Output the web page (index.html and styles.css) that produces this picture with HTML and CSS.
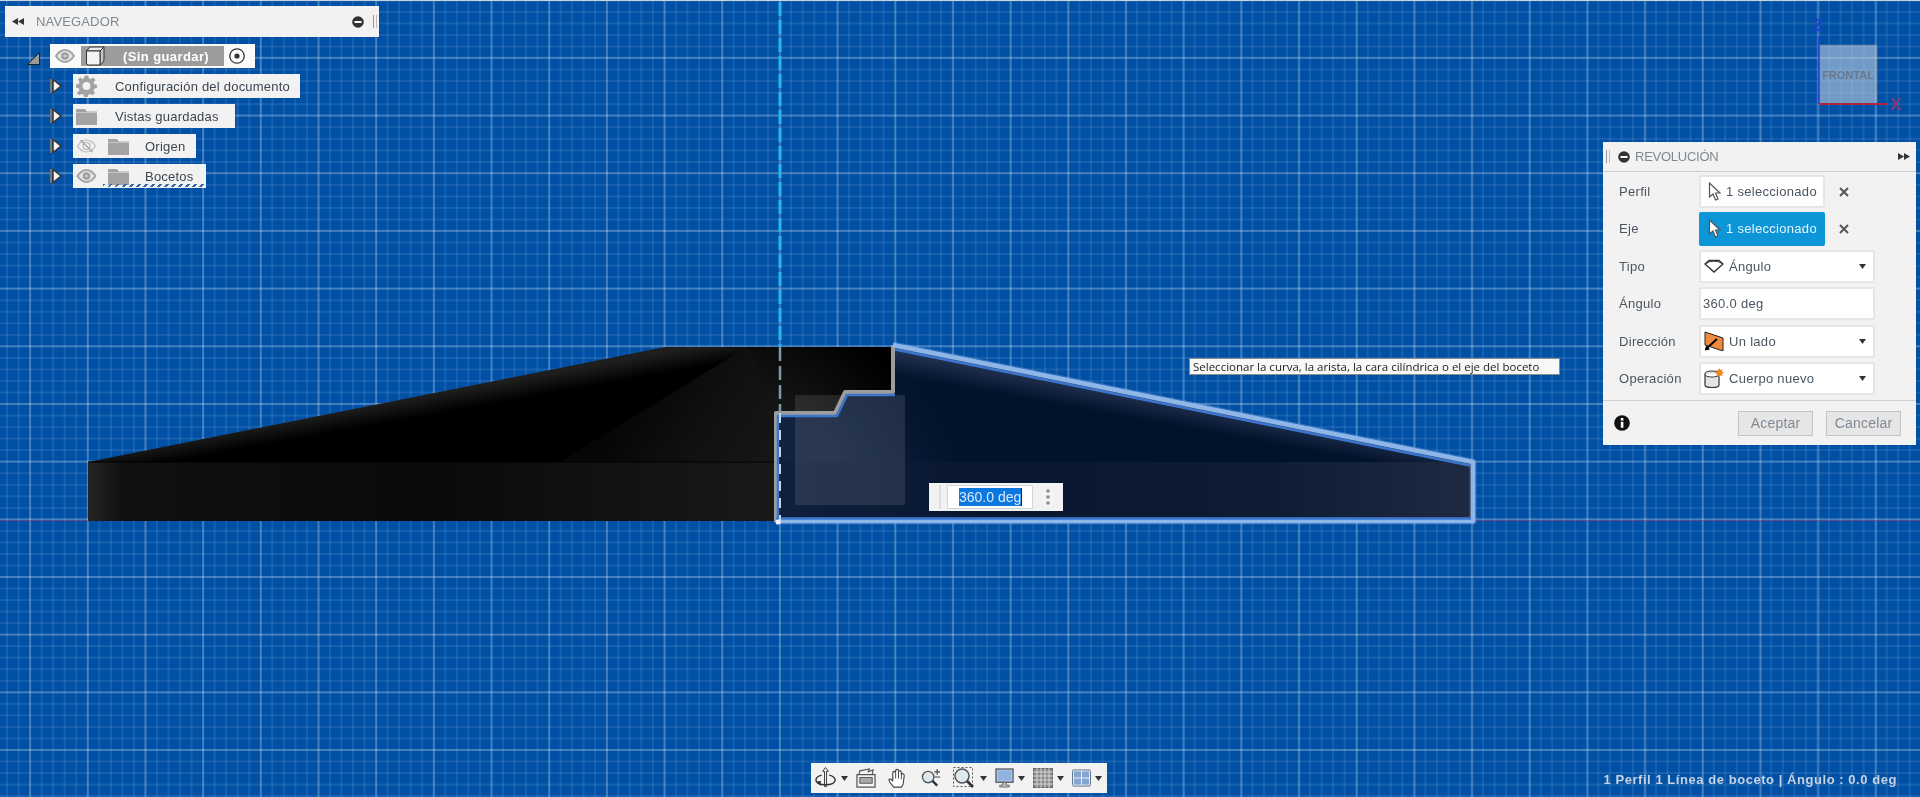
FILE: index.html
```html
<!DOCTYPE html>
<html lang="es">
<head>
<meta charset="utf-8">
<title>Revolución</title>
<link rel="stylesheet" href="styles.css">
</head>
<body>
<svg class="defs" width="0" height="0" aria-hidden="true">
  <defs>
    <symbol id="eye" viewBox="0 0 20 14"><path d="M1 7C4 2.500 7 1 10 1s6 1.500 9 6c-3 4.500-6 6-9 6s-6-1.500-9-6z" fill="#e4e4e4" stroke="#a5a5a5" stroke-width="2"/><circle cx="10" cy="7" r="3.800" fill="#a0a0a0"/><circle cx="10" cy="7" r="1.300" fill="#d0d0d0"/></symbol>
    <symbol id="eyeoff" viewBox="0 0 20 14"><path d="M1 7C4 2.500 7 1 10 1s6 1.500 9 6c-3 4.500-6 6-9 6s-6-1.500-9-6z" fill="none" stroke="#b5b5b5" stroke-width="1.200"/><circle cx="10" cy="7" r="3.500" fill="none" stroke="#b5b5b5" stroke-width="1.200"/><path d="M4 1l12 12" stroke="#a5a5a5" stroke-width="1.400"/></symbol>
    <symbol id="folder" viewBox="0 0 21 17"><path d="M0 1h9l2 2.500h10V17H0z" fill="#a3a3a3"/><path d="M0 4.500h21" stroke="#cfcfcf" stroke-width=".8"/></symbol>
    <symbol id="expand" viewBox="0 0 12 16"><path d="M1 1v14" stroke="#777" stroke-width="2"/><path d="M3 1.500L11 8l-8 6.500z" fill="#f5f5f5" stroke="#333" stroke-width="1.500"/></symbol>
    <symbol id="caret" viewBox="0 0 7 5"><path d="M0 0h7L3.500 5z" fill="#333"/></symbol>
    <symbol id="cursor" viewBox="0 0 13 20"><path d="M1.500 1L1.500 15l3.500-3 2.500 6 2.500-1-2.500-6h4.500z" stroke="#555" stroke-width="1.200"/></symbol>
    <symbol id="remove" viewBox="0 0 10 10"><path d="M1 1l8 8M9 1L1 9" stroke="#555" stroke-width="2"/></symbol>
  </defs>
</svg>
<main class="viewport">
  <svg class="scene" viewBox="0 0 1920 797" width="1920" height="797" aria-hidden="true">
    <defs>
      <linearGradient id="bandDark" x1="88" y1="0" x2="776" y2="0" gradientUnits="userSpaceOnUse">
        <stop offset="0" stop-color="#242424"/><stop offset=".05" stop-color="#101010"/><stop offset=".5" stop-color="#0a0a0a"/><stop offset="1" stop-color="#191919"/>
      </linearGradient>
      <linearGradient id="bandNavy" x1="776" y1="0" x2="1473" y2="0" gradientUnits="userSpaceOnUse">
        <stop offset="0" stop-color="#10203c"/><stop offset=".3" stop-color="#081630"/><stop offset=".7" stop-color="#0d1b35"/><stop offset="1" stop-color="#1f2a42"/>
      </linearGradient>
      <linearGradient id="slopeDark" x1="376.500" y1="404.500" x2="380" y2="424" gradientUnits="userSpaceOnUse">
        <stop offset="0" stop-color="#1e1e1e"/><stop offset="1" stop-color="#000"/>
      </linearGradient>
      <linearGradient id="slopeNavy" x1="1180" y1="404" x2="1176" y2="426" gradientUnits="userSpaceOnUse">
        <stop offset="0" stop-color="#1f2f4e"/><stop offset="1" stop-color="#1f2f4e" stop-opacity="0"/>
      </linearGradient>
      <linearGradient id="diagDark" x1="640" y1="390" x2="760" y2="470" gradientUnits="userSpaceOnUse">
        <stop offset="0" stop-color="#060606"/><stop offset=".5" stop-color="#101010"/><stop offset="1" stop-color="#161616"/>
      </linearGradient>
      <linearGradient id="cornerBlack" x1="870" y1="352" x2="800" y2="425" gradientUnits="userSpaceOnUse">
        <stop offset="0" stop-color="#000"/><stop offset=".5" stop-color="#000" stop-opacity=".5"/><stop offset="1" stop-color="#000" stop-opacity="0"/>
      </linearGradient>
      <linearGradient id="diagNavy" x1="1010" y1="385" x2="850" y2="480" gradientUnits="userSpaceOnUse">
        <stop offset="0" stop-color="#02122b"/><stop offset=".45" stop-color="#03132c"/><stop offset="1" stop-color="#11213e"/>
      </linearGradient>
    </defs>
    <path class="axis-x" d="M0 520.500H88M1476 520.500H1920"/>
    <path d="M88 462L665 347H893V413H776V462z" fill="url(#slopeDark)"/>
    <path d="M560 462L747 347H893V413H776V462z" fill="url(#diagDark)"/>
    <path d="M747 347H893V392H845L835 413H776z" fill="url(#cornerBlack)"/>
    <path d="M88 462H776V521H88z" fill="url(#bandDark)"/>
    <path d="M88 462H776" stroke="#000" stroke-width="1"/>
    <path d="M776 413H835L845 392H893V345L1473 462H776z" fill="url(#diagNavy)"/>
    <path d="M893 345L1473 462H1300L893 380z" fill="url(#slopeNavy)"/>
    <path d="M776 462H1473V521H776z" fill="url(#bandNavy)"/>
    <rect class="sketch-plane" x="795" y="395" width="110" height="110"/>
    <path class="edge-glow" d="M893 345L1473 462V521H776"/>
    <path class="edge-grey" d="M776 522V413H835L845 392H893V345"/>
    <path class="edge-blue" d="M778 522V416H837L847 395H895"/>
    <path class="edge-light" d="M893 345L1473 462V521H776"/>
    <path class="edge-blue" d="M895 349.500L1470 465.500M776 518.500H1471"/>
    <path class="axis-top" d="M780 0V347"/>
    <path class="axis-low" d="M780 347V413"/>
    <path class="axis-mid" d="M780 413V523"/>
    <circle cx="778" cy="522" r="2.500" fill="#f0f4fa"/>
    <rect class="cube" x="1819" y="45" width="58" height="59"/>
    <text class="cube-label" x="1848" y="79">FRONTAL</text>
    <path d="M1819 36V104" stroke="#2a3fd8" stroke-width="1.600"/>
    <path d="M1819 104H1888" stroke="#b5213f" stroke-width="1.800"/>
    <text class="axis-label axis-label-z" x="1818" y="31">Z</text>
    <text class="axis-label axis-label-x" x="1896" y="110">X</text>
  </svg>

  <section class="navigator">
    <header class="nav-head">
      <svg class="ic-rewind" viewBox="0 0 12 7" width="12" height="7"><path d="M6 0v7L0 3.500zM12 0v7L6 3.500z" fill="#333"/></svg>
      <span class="nav-title">NAVEGADOR</span>
      <svg class="ic-minus" viewBox="0 0 12 12" width="12" height="12"><circle cx="6" cy="6" r="5.800" fill="#333"/><path d="M2.500 6h7" stroke="#fff" stroke-width="2"/></svg>
      <span class="grip"></span>
    </header>
    <ul class="tree">
      <li class="tree-row tree-root">
        <svg class="ic-open" viewBox="0 0 13 13" width="13" height="13"><path d="M.5 12.500h12V.5z" fill="#999" stroke="#222"/></svg>
        <div class="chip chip-root">
          <svg class="ic-eye" width="20" height="14"><use href="#eye"/></svg>
          <div class="doc-name">
            <svg class="ic-cube" viewBox="0 0 20 20" width="20" height="20"><path d="M5 1h14l-4 4H1.500z" fill="#e6e8ec" stroke="#222" stroke-width=".9"/><path d="M15 5l4-4v12c0 2-1 4-4 6z" fill="#c8c8c8" stroke="#222" stroke-width=".9"/><path d="M1.500 5H15v14H3.500a2 2 0 0 1-2-2z" fill="#f1f3f6" stroke="#222" stroke-width=".9"/></svg>
            <span>(Sin guardar)</span>
          </div>
          <svg class="ic-radio" viewBox="0 0 16 16" width="16" height="16"><circle cx="8" cy="8" r="7.200" fill="#fff" stroke="#333" stroke-width="1.300"/><circle cx="8" cy="8" r="2.600" fill="#333"/></svg>
        </div>
      </li>
      <li class="tree-row">
        <svg class="ic-expand" width="12" height="16"><use href="#expand"/></svg>
        <div class="chip chip-config">
          <svg class="ic-first" viewBox="0 0 24 24" width="22" height="22"><path fill="#a3a3a3" d="M10 1h4l.6 3 2.400 1 2.600-1.700 2.800 2.800L20 8.700l1 2.400 3 .6v3.600l-3 .6-1 2.400 1.700 2.600-2.800 2.800-2.600-1.700-2.400 1-.6 3h-4l-.6-3-2.400-1-2.600 1.700-2.800-2.800L4 17.900l-1-2.400-3-.6v-3.600l3-.6 1-2.400-1.700-2.600 2.800-2.800L6.700 5l2.400-1zM12 8.500a4.500 4.500 0 1 0 0 9 4.500 4.500 0 0 0 0-9z" transform="translate(0 -1)"/></svg>
          <span class="chip-text">Configuración del documento</span>
        </div>
      </li>
      <li class="tree-row">
        <svg class="ic-expand" width="12" height="16"><use href="#expand"/></svg>
        <div class="chip chip-views">
          <svg class="ic-first" width="21" height="17"><use href="#folder"/></svg>
          <span class="chip-text">Vistas guardadas</span>
        </div>
      </li>
      <li class="tree-row">
        <svg class="ic-expand" width="12" height="16"><use href="#expand"/></svg>
        <div class="chip chip-origin">
          <svg class="ic-first ic-eye-row" width="20" height="14"><use href="#eyeoff"/></svg>
          <svg class="ic-second" width="21" height="17"><use href="#folder"/></svg>
          <span class="chip-text">Origen</span>
        </div>
      </li>
      <li class="tree-row">
        <svg class="ic-expand" width="12" height="16"><use href="#expand"/></svg>
        <div class="chip chip-sketches">
          <svg class="ic-first ic-eye-row" width="20" height="14"><use href="#eye"/></svg>
          <svg class="ic-second" width="21" height="17"><use href="#folder"/></svg>
          <span class="chip-text">Bocetos</span>
        </div>
      </li>
    </ul>
  </section>

  <div class="hint">Seleccionar la curva, la arista, la cara cilíndrica o el eje del boceto</div>

  <div class="dim-input">
    <span class="dim-grip"></span>
    <div class="dim-field"><span class="dim-sel">360.0 deg</span><span class="dim-caret"></span></div>
    <svg class="dim-more" viewBox="0 0 4 16" width="4" height="16"><circle cx="2" cy="2" r="1.800"/><circle cx="2" cy="8" r="1.800"/><circle cx="2" cy="14" r="1.800"/></svg>
  </div>

  <section class="dialog">
    <header class="dlg-head">
      <span class="grip grip-left"></span>
      <svg viewBox="0 0 12 12" width="12" height="12"><circle cx="6" cy="6" r="5.800" fill="#333"/><path d="M2.500 6h7" stroke="#fff" stroke-width="2"/></svg>
      <span class="dlg-title">REVOLUCIÓN</span>
      <svg class="ic-forward" viewBox="0 0 12 7" width="12" height="7"><path d="M0 0v7l6-3.500zM6 0v7l6-3.500z" fill="#333"/></svg>
    </header>
    <div class="dlg-body">
      <div class="dlg-row">
        <span class="dlg-label">Perfil</span>
        <div class="field field-short"><svg class="cur" width="13" height="20"><use href="#cursor" fill="#fff"/></svg><span>1 seleccionado</span></div>
        <svg class="clear" width="10" height="10"><use href="#remove"/></svg>
      </div>
      <div class="dlg-row">
        <span class="dlg-label">Eje</span>
        <div class="field field-short field-active"><svg class="cur" width="13" height="20"><use href="#cursor" fill="#fff"/></svg><span>1 seleccionado</span></div>
        <svg class="clear" width="10" height="10"><use href="#remove"/></svg>
      </div>
      <div class="dlg-row">
        <span class="dlg-label">Tipo</span>
        <div class="field field-wide">
          <svg class="opt" viewBox="0 0 20 14" width="20" height="14"><path d="M1 5l4-3.500h10L19 5l-9 8z" fill="#fff" stroke="#333" stroke-width="1.400"/><path d="M1 5q9-6 18 0" fill="none" stroke="#333" stroke-width="1"/></svg>
          <span>Ángulo</span>
          <svg class="drop" width="7" height="5"><use href="#caret"/></svg>
        </div>
      </div>
      <div class="dlg-row">
        <span class="dlg-label">Ángulo</span>
        <div class="field field-wide field-input"><span>360.0 deg</span></div>
      </div>
      <div class="dlg-row">
        <span class="dlg-label">Dirección</span>
        <div class="field field-wide">
          <svg class="opt" viewBox="0 0 20 20" width="20" height="20"><path d="M1 1l18 6v13L1 14z" fill="#f08a3c" stroke="#222" stroke-width="1"/><path d="M13 8L2 18" stroke="#000" stroke-width="2"/><path d="M1 19.500l1-5 4 4z" fill="#000"/></svg>
          <span>Un lado</span>
          <svg class="drop" width="7" height="5"><use href="#caret"/></svg>
        </div>
      </div>
      <div class="dlg-row">
        <span class="dlg-label">Operación</span>
        <div class="field field-wide">
          <svg class="opt" viewBox="0 0 20 20" width="20" height="20"><path d="M1 6c0-2 3-3 7-3s7 1 7 3v11c0 1.500-3 2.500-7 2.500S1 18.500 1 17z" fill="#e4e4e4" stroke="#333" stroke-width="1.200"/><path d="M1 6c0 2 3 3 7 3s7-1 7-3" fill="#fff" stroke="#333" stroke-width="1"/><path d="M15.500 0l1 2 2-.5-.5 2 2 1.200-2 1.200.5 2-2-.5-1 2-1-2-2 .5.500-2-2-1.200 2-1.200-.5-2 2 .5z" fill="#f08a1c"/></svg>
          <span>Cuerpo nuevo</span>
          <svg class="drop" width="7" height="5"><use href="#caret"/></svg>
        </div>
      </div>
    </div>
    <footer class="dlg-foot">
      <svg class="ic-info" viewBox="0 0 16 16" width="16" height="16"><circle cx="8" cy="8" r="7.800" fill="#111"/><rect x="6.800" y="6.800" width="2.600" height="6" fill="#fff"/><rect x="6.800" y="3" width="2.600" height="2.600" fill="#fff"/></svg>
      <button class="btn btn-ok" type="button">Aceptar</button>
      <button class="btn" type="button">Cancelar</button>
    </footer>
  </section>

  <nav class="toolbar">
    <svg class="tool" viewBox="0 0 22 24" width="21" height="24"><path d="M11 1l3 4h-2v16h-2V5H8z" fill="#fff" stroke="#333"/><path d="M7 9C3 10 1 12 1 14c0 3 4 5 10 5s10-2 10-5c0-2-2-4-6-5" fill="none" stroke="#333" stroke-width="1.500"/><path d="M1 16l5-1v5z" fill="#333"/></svg>
    <svg class="tool-caret" width="7" height="5"><use href="#caret"/></svg>
    <svg class="tool tool-gap" viewBox="0 0 21 21" width="20" height="20"><path d="M1 7h19v13H1z" fill="#f4f4f4" stroke="#555" stroke-width="1.300"/><rect x="4" y="10" width="13" height="6" fill="#a9a9a9" stroke="#555"/><path d="M3 7l1-4 10-2-1 3 5-2-1 5" fill="none" stroke="#555" stroke-width="1.200"/></svg>
    <svg class="tool tool-wide" viewBox="0 0 22 22" width="21" height="21"><path d="M6 20c-2-3-5-5-5-8 1-1 3 0 4 2V5c0-2 2-2 3 0V3c0-2 3-2 3 0v1c1-2 3-1 3 1v2c1-2 3-1 3 1l-1 8c0 2-1 3-2 4z" fill="#fff" stroke="#444" stroke-width="1.200"/><path d="M8 5v6M11 4v7M14 6v6" stroke="#444"/></svg>
    <svg class="tool tool-wide" viewBox="0 0 21 20" width="20" height="20"><circle cx="7.500" cy="9" r="6" fill="#dce8ef" stroke="#555" stroke-width="1.400"/><path d="M12 13l5 5" stroke="#333" stroke-width="2.400"/><path d="M14 3.500h6M17 .5v6M14 9h6" stroke="#444" stroke-width="1.200"/></svg>
    <svg class="tool tool-wide" viewBox="0 0 22 22" width="22" height="22"><rect x=".5" y=".5" width="19" height="19" fill="none" stroke="#555" stroke-dasharray="2 2"/><circle cx="9" cy="9" r="7" fill="#dce8ef" stroke="#555" stroke-width="1.500"/><path d="M14 14l6 6" stroke="#333" stroke-width="2.600"/></svg>
    <svg class="tool-caret" width="7" height="5"><use href="#caret"/></svg>
    <svg class="tool tool-gap" viewBox="0 0 20 21" width="19" height="20"><rect x="1" y="1" width="18" height="14" fill="#a7c3e6" stroke="#555" stroke-width="1.300"/><rect x="3" y="3" width="14" height="10" fill="#8fb2de"/><path d="M8 15v3H5v2h10v-2h-3v-3z" fill="#bbb" stroke="#555" stroke-width=".8"/></svg>
    <svg class="tool-caret tool-caret-near" width="7" height="5"><use href="#caret"/></svg>
    <svg class="tool tool-gap" viewBox="0 0 20 20" width="20" height="20"><rect x=".5" y=".5" width="19" height="19" fill="#8a8a8a" stroke="#666"/><path d="M4 0v20M8 0v20M12 0v20M16 0v20M0 4h20M0 8h20M0 12h20M0 16h20" stroke="#e4e4e4" stroke-width=".8"/></svg>
    <svg class="tool-caret tool-caret-near" width="7" height="5"><use href="#caret"/></svg>
    <svg class="tool tool-gap" viewBox="0 0 20 18" width="19" height="18"><rect x=".5" y=".5" width="19" height="17" rx="1.500" fill="#eef2f7" stroke="#5a6a84"/><rect x="2" y="2" width="7.500" height="6.500" fill="#86a5d2"/><rect x="10.500" y="2" width="7.500" height="6.500" fill="#86a5d2"/><rect x="2" y="9.500" width="7.500" height="6.500" fill="#86a5d2"/><rect x="10.500" y="9.500" width="7.500" height="6.500" fill="#86a5d2"/></svg>
    <svg class="tool-caret tool-caret-near" width="7" height="5"><use href="#caret"/></svg>
  </nav>

  <p class="status">1 Perfil 1 Línea de boceto | Ángulo : 0.0 deg</p>
</main>
</body>
</html>
```
FILE: styles.css
```css
* { box-sizing: border-box; }
html, body { margin: 0; padding: 0; height: 100%; overflow: hidden; }
body { font-family: "Liberation Sans", Arial, sans-serif; background: #0050a6; }
.defs { position: absolute; }

.viewport {
  position: relative;
  width: 1920px;
  height: 797px;
  overflow: hidden;
  filter: blur(0.45px);
  border-top: 1px solid #c9d3de;
  background-color: #0050a6;
  background-image:
    linear-gradient(90deg, rgba(255,255,255,.2) 1.5px, transparent 1.5px),
    linear-gradient(0deg, rgba(255,255,255,.2) 1.5px, transparent 1.5px),
    linear-gradient(90deg, rgba(255,255,255,.09) 1.5px, transparent 1.5px),
    linear-gradient(0deg, rgba(255,255,255,.09) 1.5px, transparent 1.5px);
  background-size: 57.7px 57.7px, 57.7px 57.7px, 11.54px 11.54px, 11.54px 11.54px;
  background-position: 29.1px 0, 0 0.1px, 6.1px 0, 0 0.4px;
}
.scene { position: absolute; left: 0; top: -1px; display: block; }
.axis-x { fill: none; stroke: #a8306a; stroke-opacity: .45; stroke-width: 1.200; }
.sketch-plane { fill: #fff; fill-opacity: .1; }
.edge-glow { fill: none; stroke: #8fb6e8; stroke-opacity: .3; stroke-width: 7; stroke-linejoin: round; }
.edge-grey { fill: none; stroke: #9c9c9c; stroke-width: 4; stroke-linejoin: round; }
.edge-blue { fill: none; stroke: #3a76cf; stroke-width: 2.500; stroke-linejoin: round; }
.edge-light { fill: none; stroke: #8fb6e8; stroke-width: 4.500; stroke-linejoin: round; }
.axis-top { fill: none; stroke: #27b5ee; stroke-width: 3; stroke-dasharray: 14 4; stroke-dashoffset: -2; }
.axis-low { fill: none; stroke: #7d9aa6; stroke-width: 2.500; stroke-dasharray: 14 5; }
.axis-mid { fill: none; stroke: #c3d4ee; stroke-width: 2; stroke-dasharray: 10 7; }
.cube { fill: #b7c8dc; fill-opacity: .62; stroke: #6f7f90; stroke-opacity: .6; }
.cube-label { font: bold 11px "Liberation Sans", sans-serif; fill: #6a7480; text-anchor: middle; opacity: .85; }
.axis-label { font: bold 16px "Liberation Sans", sans-serif; }
.axis-label-z { fill: #1c40d0; text-anchor: middle; }
.axis-label-x { fill: #8a3a78; text-anchor: middle; }

/* Navigator */
.navigator { position: absolute; left: 5px; top: 5px; width: 374px; }
.nav-head {
  display: flex;
  align-items: center;
  height: 31px;
  padding: 0 2px 0 7px;
  background: #f2f2f2;
}
.nav-title { margin-left: 12px; font-size: 13px; letter-spacing: .15px; color: #7f8892; flex: 1; }
.ic-minus { margin-right: 9px; }
.grip { display: block; width: 4px; height: 13px; border-left: 1px solid #999; border-right: 1px solid #bbb; }
.grip-left { margin: 0 8px 0 0; }

.tree { list-style: none; margin: 7px 0 0; padding: 0; display: flex; flex-direction: column; gap: 6px; }
.tree-row { display: flex; align-items: center; height: 24px; padding-left: 45px; }
.tree-row .ic-expand { margin-right: 11px; margin-left: 0; }
.tree-root { padding-left: 22px; }
.ic-open { margin-right: 10px; margin-top: 4px; }
.chip {
  display: flex;
  align-items: center;
  height: 24px;
  padding: 0 0 0 3px;
  background: #f2f2f2;
  font-size: 13px;
  letter-spacing: .22px;
  color: #3c4650;
  position: relative;
  white-space: nowrap;
}
.chip-config { width: 227px; }
.chip-views { width: 162px; }
.chip-origin { width: 123px; }
.chip-sketches { width: 133px; }
.chip-sketches::after {
  content: "";
  position: absolute;
  left: 30px;
  right: 0;
  bottom: 1px;
  height: 3px;
  background: repeating-linear-gradient(135deg, #3a66a8 0 2px, transparent 2px 5px);
}
.chip-root { width: 205px; padding: 0 0 0 5px; background: #fafafa; }
.ic-eye { margin-right: 6px; }
.doc-name {
  display: flex;
  align-items: center;
  width: 143px;
  height: 20px;
  background: #9c9c9c;
  color: #fff;
  font-weight: bold;
  letter-spacing: .4px;
  padding-left: 4px;
}
.doc-name span { margin-left: 18px; }
.ic-radio { margin-left: 5px; }
.ic-first { width: 21px; margin-right: 18px; }
.ic-eye-row { margin-right: 11px; }
.ic-second { margin-right: 16px; }

/* Hint */
.hint {
  position: absolute;
  left: 1189px;
  top: 357px;
  width: 371px;
  height: 17px;
  padding-left: 3px;
  line-height: 15px;
  white-space: nowrap;
  background: #f8f8f8;
  border: 1px solid #8a8a8a;
  font-family: "Open Sans", sans-serif;
  font-size: 11.5px;
  color: #222;
}

/* On-canvas input */
.dim-input {
  position: absolute;
  left: 929px;
  top: 482px;
  width: 134px;
  height: 28px;
  display: flex;
  align-items: center;
  background: #f2f2f2;
}
.dim-grip { width: 12px; height: 24px; margin: 0 6px 0 0; border-right: 2px solid #ddd; }
.dim-field {
  width: 86px;
  height: 24px;
  background: #fff;
  border: 1px solid #d4d4d4;
  display: flex;
  align-items: center;
  padding-left: 11px;
  font-size: 14px;
}
.dim-sel { background: #0a78e0; color: #dbe9fa; line-height: 18px; white-space: nowrap; }
.dim-caret { width: 1px; height: 18px; background: #123; }
.dim-more { margin-left: 13px; fill: #8a8a8a; }

/* Dialog */
.dialog {
  position: absolute;
  left: 1603px;
  top: 141px;
  width: 313px;
  height: 303px;
  display: flex;
  flex-direction: column;
  background: #f2f2f2;
  font-size: 13px;
  letter-spacing: .3px;
  color: #4a5560;
}
.dlg-head {
  display: flex;
  align-items: center;
  height: 30px;
  padding: 0 6px 0 3px;
  border-bottom: 1px solid #cfcfcf;
}
.dlg-title { flex: 1; margin-left: 5px; font-size: 13px; letter-spacing: -.25px; color: #7f8892; }
.dlg-body { display: grid; grid-auto-rows: 33px; row-gap: 4.4px; padding-top: 3px; flex: 1; }
.dlg-row { display: flex; align-items: center; }
.dlg-label { width: 96px; padding-left: 16px; }
.field {
  display: flex;
  align-items: center;
  height: 33px;
  background: #fff;
  border: 2px solid #e6e6e6;
  border-radius: 2px;
  white-space: nowrap;
}
.field-short { width: 126px; padding-left: 7px; }
.field-active { background: #0c96d8; border-color: #0c96d8; color: #e6f4fb; height: 34px; }
.cur { margin-right: 5px; }
.clear { margin-left: 14px; }
.field-wide { width: 176px; padding-left: 3px; }
.field-input { padding-left: 2px; }
.opt { margin-right: 5px; flex: none; }
.drop { margin-left: auto; margin-right: 7px; }
.dlg-foot {
  display: flex;
  align-items: center;
  height: 45px;
  padding: 0 15px 0 11px;
  border-top: 1px solid #cfcfcf;
}
.ic-info { margin-right: auto; }
.btn {
  width: 75px;
  height: 25px;
  padding: 0;
  background: #e6e6e6;
  border: 1px solid #c4c4c4;
  border-radius: 0;
  font: inherit;
  font-size: 14px;
  letter-spacing: .2px;
  color: #808a94;
}
.btn-ok { margin-right: 13px; }

/* Bottom toolbar */
.toolbar {
  position: absolute;
  left: 811px;
  top: 762px;
  width: 296px;
  height: 30px;
  display: flex;
  align-items: center;
  padding-left: 4px;
  background: #f2f2f2;
}
.tool { flex: none; }
.tool-gap { margin-left: 8px; }
.tool-wide { margin-left: 12px; }
.tool-caret { margin-left: 5px; flex: none; }
.tool-caret-near { margin-left: 4px; }

/* Status */
.status {
  position: absolute;
  right: 23px;
  top: 771px;
  margin: 0;
  font-size: 13px;
  font-weight: bold;
  letter-spacing: .55px;
  color: #c6d3e4;
  white-space: nowrap;
}
```
